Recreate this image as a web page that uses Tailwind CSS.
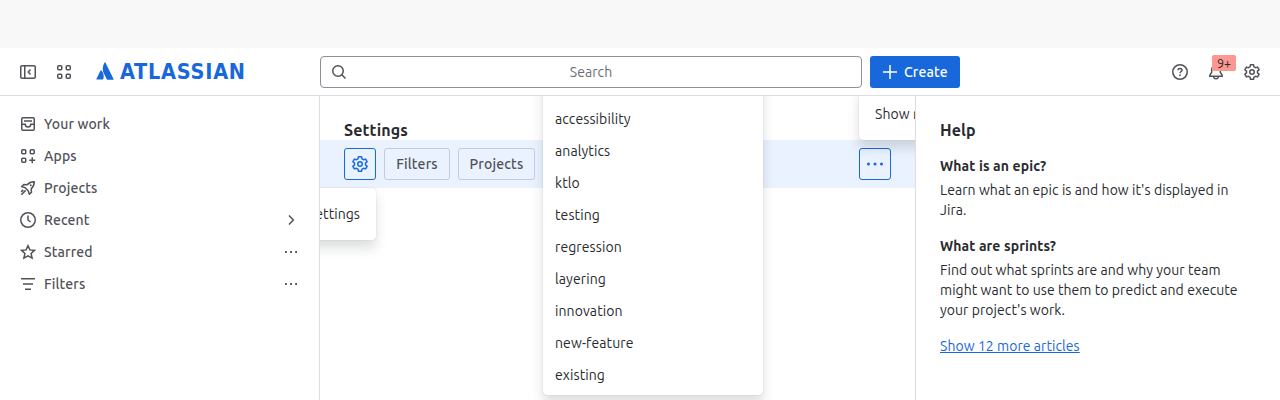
<!DOCTYPE html>
<html lang="en">
<head>
<meta charset="utf-8">
<title>Settings</title>
<script src="https://cdn.jsdelivr.net/npm/@tailwindcss/browser@4"></script>
</head>
<body class="h-[400px] overflow-hidden bg-white font-['Ubuntu','Noto_Sans',sans-serif] text-sm leading-5 tracking-[0.06px] text-[#292a2e]">
<div class="h-12 bg-[#f8f8f8]"></div>
<header class="flex h-12 items-center border-b border-[#dddee1] px-3 text-[#505258]">
  <div class="flex w-[308px] items-center gap-1">
    <button class="grid size-8 place-items-center"><svg class="size-4" viewBox="0 0 16 16" fill="none" stroke="currentColor" stroke-width="1.5"><rect x=".75" y="1.75" width="14.5" height="12.5" rx="1.25"/><path d="M4.75 2v12M10.5 5.5 8.2 8l2.3 2.5"/></svg></button>
    <button class="grid size-8 place-items-center"><svg class="size-4" viewBox="0 0 16 16" fill="none" stroke="currentColor" stroke-width="1.5"><rect x="1.75" y="1.75" width="4" height="4" rx="1"/><rect x="10.25" y="1.75" width="4" height="4" rx="1"/><rect x="1.75" y="10.25" width="4" height="4" rx="1"/><rect x="10.25" y="10.25" width="4" height="4" rx="1"/></svg></button>
    <a class="mb-0.5 ml-3 flex items-center gap-1.5 text-[#1868db]">
      <svg class="h-[18px] w-[18px]" viewBox="0.5 0.5 30.5 30.5" fill="currentColor"><path d="M9.3 14.5c-.3-.3-.7-.3-.9.1L1.1 29.4c-.2.4.1.9.6.9H12c.2 0 .5-.1.6-.3 2.2-4.6.9-11.6-3.3-15.5z"/><path d="M15.1 1.2c-4.1 6.5-3.8 13.7-1.1 19.2l5 9.9c.1.2.3.3.6.3h10.2c.5 0 .8-.5.6-.9L16.4 1.2c-.3-.5-1-.5-1.3 0z"/></svg>
      <span class="pt-0.5 font-['DejaVu_Sans_Condensed','DejaVu_Sans',sans-serif] text-[21.5px] leading-6 font-bold tracking-[0.75px]">ATLASSIAN</span>
    </a>
  </div>
  <div class="flex h-8 w-[542px] items-center rounded-[4px] border border-[#8c8f97] pl-2.5 text-[#6b6e76]">
    <svg class="size-4 text-[#505258]" viewBox="0 0 16 16" fill="none" stroke="currentColor" stroke-width="1.5"><circle cx="7" cy="7" r="5.25"/><path d="m10.8 10.8 3.7 3.7"/></svg>
    <span class="flex-1 pr-[26px] text-center">Search</span>
  </div>
  <button class="ml-2 flex h-8 w-[90px] items-center gap-1.5 rounded-[3px] bg-[#1868db] pl-3 font-medium tracking-[0.13px] text-white"><svg class="size-4" viewBox="0 0 16 16" stroke="currentColor" stroke-width="1.5"><path d="M8 1v14M1 8h14"/></svg>Create</button>
  <div class="ml-auto flex items-center gap-1">
    <button class="grid size-8 place-items-center"><svg class="size-4" viewBox="0 0 16 16" fill="none" stroke="currentColor" stroke-width="1.5"><circle cx="8" cy="8" r="7.25"/><path d="M6 6.3c0-1.1.9-1.9 2-1.9s2 .8 2 1.8C10 7.5 8 7.6 8 9.3"/><circle cx="8" cy="11.2" r=".9" fill="currentColor" stroke="none"/></svg></button>
    <button class="relative grid size-8 place-items-center"><svg class="size-4" viewBox="0 0 16 16" fill="none" stroke="currentColor" stroke-width="1.5"><path d="M3.7 5.5a4.3 4.3 0 0 1 8.6 0v2.7l1.9 3.3v.75H1.8v-.75l1.9-3.3z"/><path d="M5.5 12.5c.2 1.3 1.2 2.2 2.5 2.2s2.3-.9 2.5-2.2"/></svg><span class="absolute top-[-1px] left-3 h-4 w-6 rounded-[2px] bg-[#fd9891] text-center text-[12.5px] leading-4 text-[#292a2e]">9+</span></button>
    <button class="grid size-8 place-items-center"><svg class="size-4" viewBox="0 0 16 16" fill="none" stroke="currentColor" stroke-width="1.5" stroke-linejoin="round"><path d="M6.5.75h3l.5 2.1 1.5.85 2.1-.6 1.5 2.6L13.5 7.15v1.7l1.6 1.45-1.5 2.6-2.1-.6-1.5.85-.5 2.1h-3L6 13.15l-1.5-.85-2.1.6-1.5-2.6L2.5 8.85v-1.7L.9 5.7l1.5-2.6 2.1.6L6 2.85z"/><circle cx="8" cy="8" r="2.25"/></svg></button>
  </div>
</header>
<div class="flex h-[304px]">
  <nav class="w-80 shrink-0 border-r border-[#dddee1] px-5 pt-3 font-medium tracking-[0.13px] text-[#505258]">
    <a class="flex h-8 items-center gap-2"><svg class="size-4" viewBox="0 0 16 16" fill="none" stroke="currentColor" stroke-width="1.5"><rect x="1.75" y="1.75" width="12.5" height="12.5" rx="1.25"/><path d="M4 5h8M2 8.25h3.25a2.75 2.75 0 0 0 5.5 0H14"/></svg>Your work</a>
    <a class="flex h-8 items-center gap-2"><svg class="size-4" viewBox="0 0 16 16" fill="none" stroke="currentColor" stroke-width="1.5"><rect x="1.75" y="1.75" width="4" height="4" rx="1"/><rect x="10.25" y="1.75" width="4" height="4" rx="1"/><rect x="1.75" y="10.25" width="4" height="4" rx="1"/><path d="M12.25 9.25v6M9.25 12.25h6"/></svg>Apps</a>
    <a class="flex h-8 items-center gap-2"><svg class="size-4" viewBox="0 0 16 16" fill="none" stroke="currentColor" stroke-width="1.5" stroke-linejoin="round"><path d="M1.6 6.6 3.8 4.5l3.3.3c1.8-2 4.2-3.05 7.15-3.05 0 2.95-1.05 5.35-3.05 7.15l.3 3.3-2.1 2.1-1.2-3.6-3-3z"/><path d="M5.6 10.4 1.3 14.7M3.2 9.9 1.2 11.9"/><circle cx="10.7" cy="5.3" r="1" fill="currentColor" stroke="none"/></svg>Projects</a>
    <a class="flex h-8 items-center gap-2"><svg class="size-4" viewBox="0 0 16 16" fill="none" stroke="currentColor" stroke-width="1.5"><circle cx="8" cy="8" r="7.25"/><path d="M8 3.5V8l2.6 2"/></svg>Recent<svg class="ml-auto size-4" viewBox="0 0 16 16" fill="none" stroke="currentColor" stroke-width="1.5"><path d="m6 3.5 4.3 4.5L6 12.5"/></svg></a>
    <a class="flex h-8 items-center gap-2"><svg class="size-4" viewBox="0 0 16 16" fill="none" stroke="currentColor" stroke-width="1.5"><path d="m8 1.7 1.9 4.2 4.6.5-3.4 3.1 1 4.6L8 11.8l-4.1 2.3 1-4.6L1.5 6.4l4.6-.5z"/></svg>Starred<svg class="ml-auto size-4" viewBox="0 0 16 16" fill="currentColor"><path d="M2 7.1h1.8v1.8H2zM7.1 7.1h1.8v1.8H7.1zM12.2 7.1H14v1.8h-1.8z"/></svg></a>
    <a class="flex h-8 items-center gap-2"><svg class="size-4" viewBox="0 0 16 16" stroke="currentColor" stroke-width="1.5"><path d="M1 2.75h14M3 8h10M5 13.25h6"/></svg>Filters<svg class="ml-auto size-4" viewBox="0 0 16 16" fill="currentColor"><path d="M2 7.1h1.8v1.8H2zM7.1 7.1h1.8v1.8H7.1zM12.2 7.1H14v1.8h-1.8z"/></svg></a>
  </nav>
  <main class="relative w-[595px] shrink-0 overflow-hidden pt-6">
    <h1 class="h-5 px-6 text-base leading-5 font-bold tracking-[0.14px]">Settings</h1>
    <div class="flex h-12 items-center gap-2 bg-[#e9f2fe] px-6 font-medium text-[#505258]">
      <button class="grid size-8 place-items-center rounded-[3px] border border-[#1868db] text-[#1868db]"><svg class="size-4" viewBox="0 0 16 16" fill="none" stroke="currentColor" stroke-width="1.5" stroke-linejoin="round"><path d="M6.5.75h3l.5 2.1 1.5.85 2.1-.6 1.5 2.6L13.5 7.15v1.7l1.6 1.45-1.5 2.6-2.1-.6-1.5.85-.5 2.1h-3L6 13.15l-1.5-.85-2.1.6-1.5-2.6L2.5 8.85v-1.7L.9 5.7l1.5-2.6 2.1.6L6 2.85z"/><circle cx="8" cy="8" r="2.25"/></svg></button>
      <button class="h-8 w-[66px] rounded-[3px] border border-[#c5cbdb] tracking-[0.16px]">Filters</button>
      <button class="h-8 w-[77px] rounded-[3px] border border-[#c5cbdb] tracking-[0.16px]">Projects</button>
      <button class="ml-auto grid size-8 place-items-center rounded-[3px] border border-[#1868db] text-[#1868db]"><svg class="h-4 w-[18px]" viewBox="0 0 18 16" fill="currentColor"><circle cx="2.5" cy="8" r="1.5"/><circle cx="9" cy="8" r="1.5"/><circle cx="15.5" cy="8" r="1.5"/></svg></button>
    </div>
    <div class="absolute top-[92px] right-[539px] rounded-[4px] bg-white px-4 py-4 whitespace-nowrap shadow-[0_8px_12px_rgba(30,31,33,0.15),0_0_1px_rgba(30,31,33,0.31)]">Settings</div>
    <div class="absolute top-[-8px] left-[539px] rounded-[4px] bg-white px-4 py-4 whitespace-nowrap shadow-[0_8px_12px_rgba(30,31,33,0.15),0_0_1px_rgba(30,31,33,0.31)]">Show more</div>
    <ul class="absolute top-[-25px] left-[223px] w-[220px] rounded-[4px] bg-white pt-8 pb-1 tracking-[0.1px] shadow-[0_8px_12px_rgba(30,31,33,0.15),0_0_1px_rgba(30,31,33,0.31)]">
      <li class="px-3 py-1.5">accessibility</li>
      <li class="px-3 py-1.5">analytics</li>
      <li class="px-3 py-1.5">ktlo</li>
      <li class="px-3 py-1.5">testing</li>
      <li class="px-3 py-1.5">regression</li>
      <li class="px-3 py-1.5">layering</li>
      <li class="px-3 py-1.5">innovation</li>
      <li class="px-3 py-1.5">new-feature</li>
      <li class="px-3 py-1.5">existing</li>
    </ul>
  </main>
  <aside class="flex-1 border-l border-[#dddee1] pt-6 pr-8 pl-6">
    <h2 class="text-base leading-5 font-bold tracking-[0.14px]">Help</h2>
    <h3 class="mt-4 font-bold tracking-[0.11px]">What is an epic?</h3>
    <p class="mt-1">Learn what an epic is and how it's displayed in Jira.</p>
    <h3 class="mt-4 font-bold tracking-[0.11px]">What are sprints?</h3>
    <p class="mt-1">Find out what sprints are and why your team might want to use them to predict and execute your project's work.</p>
    <a class="mt-4 block text-[#1868db] underline">Show 12 more articles</a>
  </aside>
</div>
</body>
</html>
